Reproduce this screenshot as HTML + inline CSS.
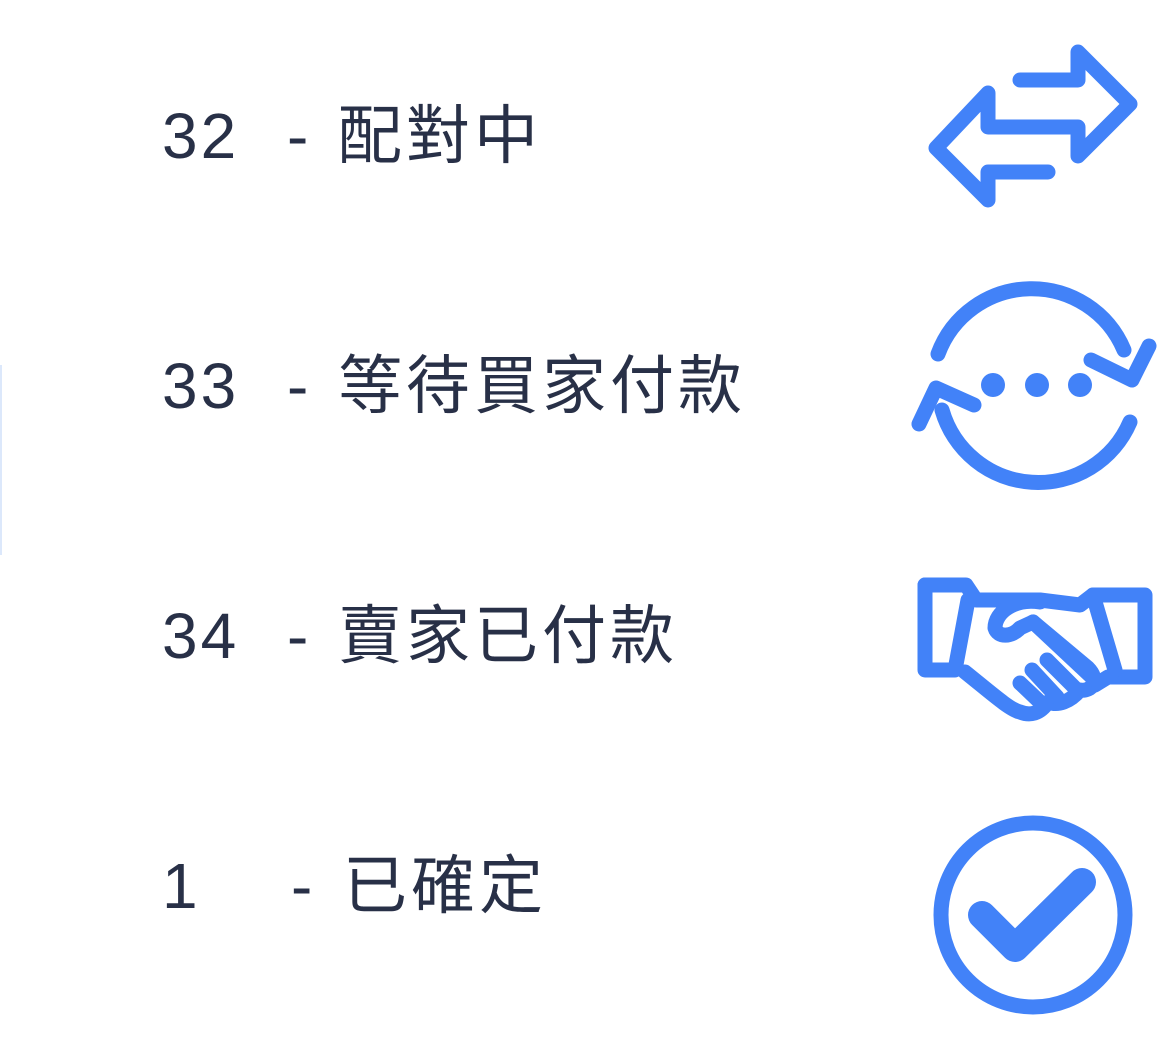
<!DOCTYPE html>
<html><head><meta charset="utf-8"><style>
body{margin:0;width:1161px;height:1042px;background:#fff;position:relative;overflow:hidden;font-family:"Liberation Sans","Noto Sans CJK TC",sans-serif;color:#283047}
.t{position:absolute;font-size:64px;line-height:64px;white-space:nowrap}
.n{letter-spacing:3px}
.c{letter-spacing:4px}
svg{position:absolute;left:0;top:0}
</style></head><body>
<div style="position:absolute;left:0;top:365px;width:2px;height:190px;background:#dce8fb"></div>
<div class="t n" style="left:162px;top:104px">32</div><div class="t" style="left:287px;top:104px">-</div><div class="t c" style="left:338px;top:104px">配對中</div>
<div class="t n" style="left:162px;top:354px">33</div><div class="t" style="left:287px;top:354px">-</div><div class="t c" style="left:338px;top:354px">等待買家付款</div>
<div class="t n" style="left:162px;top:604px">34</div><div class="t" style="left:287px;top:604px">-</div><div class="t c" style="left:338px;top:604px">賣家已付款</div>
<div class="t n" style="left:162px;top:854px">1</div><div class="t" style="left:291px;top:854px">-</div><div class="t c" style="left:343px;top:854px">已確定</div>
<svg width="1161" height="1042" fill="none" stroke="#4282f8" stroke-linecap="round" stroke-linejoin="round">
<g stroke-width="15">
<path d="M1020 80H1078V52L1130 104L1078 156V127H988V93L936 148L988 200V172H1048"/>
<path d="M938 354A100 100 0 0 1 1124 350"/>
<path d="M1130 422A100 100 0 0 1 942 410"/>
<path d="M1091 360L1132 380L1149 346"/>
<path d="M974 405L936 388L919 424"/>
<path d="M925 585H966L976 600H1040L1080 605L1093 595H1145V677H1108L1095 685"/>
<path d="M925 585V670H955L968 600"/>
<path d="M1093 595L1115 670"/>
<path d="M1040 602C1015 598 995 612 995 628C998 638 1012 637 1020 628L1033 622L1088 668C1100 680 1092 692 1080 690C1070 702 1058 706 1048 702C1040 714 1030 716 1020 712C1010 710 990 692 965 672"/>
<path d="M1047 660L1075 688M1032 670L1057 697M1020 683L1040 702"/>
<path d="M1033 622L1095 680"/>
</g>
<circle cx="993" cy="385" r="12" fill="#4282f8" stroke="none"/>
<circle cx="1037" cy="385" r="12" fill="#4282f8" stroke="none"/>
<circle cx="1080" cy="385" r="12" fill="#4282f8" stroke="none"/>
<circle cx="1033" cy="915" r="92" stroke-width="15"/>
<path d="M982 915L1015 948L1082 882" stroke-width="28"/>
</svg>
</body></html>
